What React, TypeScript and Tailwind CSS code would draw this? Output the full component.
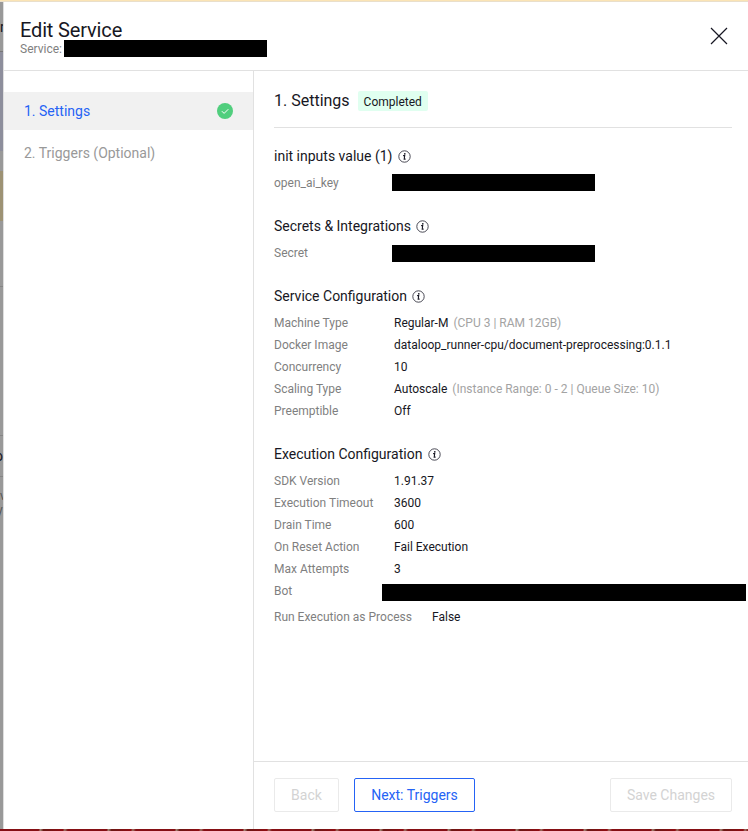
import React from "react";

type Row = { label: string; value?: string; note?: string; hidden?: "short" | "long"; raised?: boolean };

const serviceRows: Row[] = [
  { label: "Machine Type", value: "Regular-M", note: "(CPU 3 | RAM 12GB)" },
  { label: "Docker Image", value: "dataloop_runner-cpu/document-preprocessing:0.1.1" },
  { label: "Concurrency", value: "10" },
  { label: "Scaling Type", value: "Autoscale", note: "(Instance Range: 0 - 2 | Queue Size: 10)" },
  { label: "Preemptible", value: "Off" },
];

const executionRows: Row[] = [
  { label: "SDK Version", value: "1.91.37" },
  { label: "Execution Timeout", value: "3600" },
  { label: "Drain Time", value: "600" },
  { label: "On Reset Action", value: "Fail Execution" },
  { label: "Max Attempts", value: "3" },
  { label: "Bot", hidden: "long" },
];

function InfoIcon() {
  return (
    <svg width="13" height="13" viewBox="0 0 13 13" fill="none" className="mt-px ml-[5.5px] shrink-0">
      <circle cx="6.5" cy="6.5" r="5.7" stroke="#2b2b38" strokeWidth="0.85" />
      <circle cx="6.8" cy="3.8" r="0.85" fill="#171723" />
      <path d="M5.1 5.6h1.6L6.2 9.1h1.4" stroke="#171723" strokeWidth="1.1" />
    </svg>
  );
}

function DetailRow({ row }: { row: Row }) {
  return (
    <div className="flex h-[22px] items-center text-xs whitespace-nowrap">
      <span className={`shrink-0 text-[#7f7f7f] ${row.hidden === "long" ? "w-[108px]" : row.hidden ? "w-[118px]" : "w-[120px]"}`}>
        {row.label}
      </span>
      {row.hidden === "short" && <span className={`h-[17px] w-[203px] bg-black ${row.raised ? "mb-px" : ""}`} />}
      {row.hidden === "long" && <span className="mt-[3px] h-[17px] w-[364px] shrink-0 bg-black" />}
      {row.value && <span>{row.value}</span>}
      {row.note && <span className="ml-[5px] text-[#a3a3a3]">{row.note}</span>}
    </div>
  );
}

function Section({ title, rows, children }: { title: string; rows: Row[]; children?: React.ReactNode }) {
  return (
    <section className="mb-[22px]">
      <h3 className="mb-1.5 flex h-5 items-center text-sm">
        {title}
        <InfoIcon />
      </h3>
      {rows.map((row) => (
        <DetailRow key={row.label} row={row} />
      ))}
      {children}
    </section>
  );
}

function PageEdge() {
  return (
    <div className="flex w-[3px] shrink-0 flex-col overflow-hidden bg-[#999] text-sm text-[#171723]">
      <div className="h-[49px] pt-[15px] leading-5">r</div>
      <div className="h-px bg-[#777]" />
      <div className="h-[99px] bg-[#8d8e9c]" />
      <div className="h-5" />
      <div className="h-[50px] bg-[#9d9274]" />
      <div className="h-[65px]" />
      <div className="h-px bg-[#858585]" />
      <div className="h-[148px]" />
      <div className="h-px bg-[#858585]" />
      <div className="h-10 pt-[10px] leading-5"><span className="-ml-[5px]">o</span></div>
      <div className="h-px bg-[#858585]" />
      <div className="pt-3 text-xs leading-[14px] text-[#555]">
        <div>v</div>
        <div className="-ml-[3px]">y</div>
      </div>
    </div>
  );
}

export default function App() {
  return (
    <div className="flex h-[831px] w-[748px] flex-col overflow-hidden bg-white font-['Roboto',sans-serif] text-[#171723]">
      <div className="h-px shrink-0 bg-[#fbe4b5]" />
      <div className="h-px shrink-0 bg-[#e9dfcb]" />
      <div className="flex min-h-0 flex-1">
        <PageEdge />
        <div className="flex min-w-0 flex-1 flex-col border-l border-[#dedede]">
          <header className="flex h-[69px] shrink-0 justify-between border-b border-[#e1e1e1] pr-5 pl-4">
            <div className="pt-[17px]">
              <h1 className="text-xl leading-[22px] tracking-[-0.15px]">Edit Service</h1>
              <div className="-mt-px flex h-[17px] text-xs leading-[19px] text-[#7f7f7f]">
                <span className="w-11">Service:</span>
                <span className="h-[17px] w-[203px] bg-black" />
              </div>
            </div>
            <svg width="18" height="18" viewBox="0 0 18 18" className="mt-[25px]" stroke="#171723" strokeWidth="1.2">
              <path d="M1 1l16 16M17 1L1 17" />
            </svg>
          </header>
          <div className="flex min-h-0 flex-1">
            <nav className="w-[250px] shrink-0 border-r border-[#e1e1e1] pt-[21px] text-sm">
              <div className="flex h-[38px] items-center justify-between bg-[#f1f1f1] pr-5 pl-5 text-[#2563f5]">
                1. Settings
                <svg width="16" height="16" viewBox="0 0 16 16" fill="none">
                  <circle cx="8" cy="8" r="8" fill="#50ce7d" />
                  <path d="M4.9 8.2l2.2 2.2L11.3 6.2" stroke="#fff" strokeWidth="1" />
                </svg>
              </div>
              <div className="mt-1 flex h-[38px] items-center pl-5 text-[#999]">2. Triggers (Optional)</div>
            </nav>
            <main className="flex min-w-0 flex-1 flex-col">
              <div className="min-h-0 flex-1 pt-5 pr-4 pl-5">
                <div className="mb-[18px] flex h-[37px] items-start border-b border-[#e1e1e1]">
                  <h2 className="text-base leading-5">1. Settings</h2>
                  <span className="ml-2 h-5 rounded-[2px] bg-[#e0fff0] px-[6px] text-xs leading-[22px]">Completed</span>
                </div>
                <Section title="init inputs value (1)" rows={[{ label: "open_ai_key", hidden: "short", raised: true }]} />
                <Section title="Secrets & Integrations" rows={[{ label: "Secret", hidden: "short" }]} />
                <Section title="Service Configuration" rows={serviceRows} />
                <Section title="Execution Configuration" rows={executionRows}>
                  <div className="mt-1 flex h-[22px] items-center text-xs">
                    <span className="w-[158px] text-[#7f7f7f]">Run Execution as Process</span>
                    <span>False</span>
                  </div>
                </Section>
              </div>
              <footer className="flex h-[68px] shrink-0 items-start border-t border-[#e1e1e1] pt-4 pr-4 pl-5 text-sm">
                <button className="h-[34px] w-[65px] rounded-[2px] border border-[#eaeaea] text-[#d3d3d3]">Back</button>
                <button className="ml-[15px] h-[34px] w-[121px] rounded-[2px] border border-[#2563f5] text-[#2563f5]">Next: Triggers</button>
                <button className="ml-auto h-[34px] w-[122px] rounded-[2px] border border-[#eaeaea] text-[#d3d3d3]">Save Changes</button>
              </footer>
            </main>
          </div>
        </div>
      </div>
      <div className="h-[2px] shrink-0 bg-[repeating-linear-gradient(100deg,#850f14_0px,#850f14_38px,#a08370_40px,#6b1714_43px,#900c12_62px,#9b7564_64px,#850f14_67px)]" />
    </div>
  );
}
